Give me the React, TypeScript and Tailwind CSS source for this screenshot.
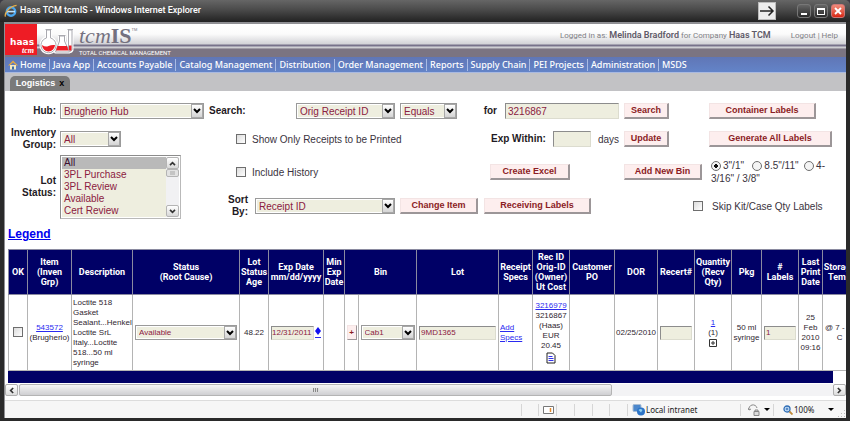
import type { ReactNode } from "react";

const menu = [
  "Java App",
  "Accounts Payable",
  "Catalog Management",
  "Distribution",
  "Order Management",
  "Reports",
  "Supply Chain",
  "PEI Projects",
  "Administration",
  "MSDS",
];

const lotStatuses = ["All", "3PL Purchase", "3PL Review", "Available", "Cert Review"];

const columnWidths = [
  "w-[19px]",
  "w-[44px]",
  "w-[61px]",
  "w-[107px]",
  "w-[29px]",
  "w-[55px]",
  "w-[21px]",
  "w-[14px]",
  "w-[58px]",
  "w-[82px]",
  "w-[34px]",
  "w-[37px]",
  "w-[45px]",
  "w-[43px]",
  "w-[37px]",
  "w-[37px]",
  "w-[30px]",
  "w-[37px]",
  "w-[24px]",
  "w-[34px]",
];

const headings: { lines: string[]; span?: number }[] = [
  { lines: ["OK"] },
  { lines: ["Item", "(Inven", "Grp)"] },
  { lines: ["Description"] },
  { lines: ["Status", "(Root Cause)"] },
  { lines: ["Lot", "Status", "Age"] },
  { lines: ["Exp Date", "mm/dd/yyyy"] },
  { lines: ["Min", "Exp", "Date"] },
  { lines: ["Bin"], span: 2 },
  { lines: ["Lot"] },
  { lines: ["Receipt", "Specs"] },
  { lines: ["Rec ID", "Orig-ID", "(Owner)", "Ut Cost"] },
  { lines: ["Customer", "PO"] },
  { lines: ["DOR"] },
  { lines: ["Recert#"] },
  { lines: ["Quantity", "(Recv", "Qty)"] },
  { lines: ["Pkg"] },
  { lines: ["#", "Labels"] },
  { lines: ["Last", "Print", "Date"] },
  { lines: ["Storage", "Temp"] },
];

function Lines({ items }: { items: string[] }) {
  return (
    <>
      {items.map((line) => (
        <span key={line} className="block whitespace-nowrap">
          {line}
        </span>
      ))}
    </>
  );
}

function Chevron({ className }: { className: string }) {
  return (
    <svg viewBox="0 0 8 6" className={className} fill="none" stroke="currentColor" strokeWidth="2">
      <path d="M1 1l3 3 3-3" />
    </svg>
  );
}

function Select({
  id,
  label,
  value,
  width,
  small,
}: {
  id: string;
  label?: string;
  value: string;
  width: string;
  small?: boolean;
}) {
  return (
    <span className={`relative block ${width}`}>
      <select
        id={id}
        aria-label={label}
        defaultValue={value}
        className={`block w-full appearance-none rounded-none border border-[#9a9a9a] bg-[#eeeedf] pl-[3px] pr-4 text-[#8b2040] outline-1 -outline-offset-2 outline-white ${
          small ? "h-[15px] text-[8px]" : "h-4 text-[10px]"
        }`}
      >
        <option>{value}</option>
      </select>
      <span className="pointer-events-none absolute inset-y-px right-px flex w-3 items-center justify-center border border-[#a8a8a8] bg-linear-to-b from-white to-[#d4d4d4] text-black">
        <Chevron className="h-[6px] w-2" />
      </span>
    </span>
  );
}

function Button({ children, width }: { children: ReactNode; width: string }) {
  return (
    <button
      type="button"
      className={`block h-4 shrink-0 whitespace-nowrap border border-b-2 border-r-2 border-[#f3e4e4] border-b-[#9c9698] border-r-[#9c9698] bg-[#fdeeee] text-[9px] leading-none font-bold text-[#8b1c24] ${width}`}
    >
      {children}
    </button>
  );
}

const field =
  "border border-[#dcdccf] border-l-[#8c8c8c] border-t-[#8c8c8c] bg-[#eeeedf] text-[#8b2040]";

const box =
  "size-[10px] shrink-0 appearance-none border border-[#6e6e6e] bg-linear-to-br from-[#dcdcdc] to-white";

function Radio({ id, label, checked }: { id: string; label: ReactNode; checked?: boolean }) {
  return (
    <>
      <input
        type="radio"
        id={id}
        name="label-size"
        defaultChecked={checked}
        className="size-[10px] appearance-none rounded-full border border-[#6e6e6e] bg-[#f4f4f4] align-middle checked:bg-[radial-gradient(circle,#111_0_2px,#f4f4f4_2px)]"
      />
      <label htmlFor={id} className="ml-0.5">
        {label}
      </label>
    </>
  );
}

function TitleBar() {
  return (
    <div className="flex h-[22px] items-center rounded-t-[5px] bg-linear-to-b from-[#666] via-[#4a4a4a] via-45% to-[#222] pl-1 pr-[5px] text-white">
      <svg viewBox="0 0 14 14" className="size-3.5" fill="none">
        <circle cx="7" cy="7.5" r="4.2" stroke="#4aa6ee" strokeWidth="2.4" />
        <path d="M3 7.6h8" stroke="#bfe3ff" strokeWidth="1.6" />
        <path d="M1.4 12.6C.2 9 6 2 12.6 1.4" stroke="#e8b04a" strokeWidth="1.3" />
      </svg>
      <span className="ml-0.5 flex-1 font-['Roboto',sans-serif] text-[9px] font-medium">
        Haas TCM tcmIS - Windows Internet Explorer
      </span>
      <button type="button" aria-label="Next" className="mr-[21px] flex h-[18px] w-[18px] items-center justify-center border border-[#bbb] bg-[#ececec] text-[#222]">
        <svg viewBox="0 0 16 12" className="h-3 w-4" fill="none" stroke="currentColor" strokeWidth="1.5">
          <path d="M1 6h13M9.500 1.500L14 6l-4.500 4.500" />
        </svg>
      </button>
      <div className="flex gap-[3px]">
        <button type="button" aria-label="Minimize" className="flex h-[14px] w-[14px] items-end justify-center rounded-[3px] border border-[#777] bg-linear-to-b from-[#666] to-[#2a2a2a] pb-0.5">
          <span className="h-0.5 w-[6px] bg-white" />
        </button>
        <button type="button" aria-label="Maximize" className="flex h-[14px] w-[14px] items-center justify-center rounded-[3px] border border-[#777] bg-linear-to-b from-[#666] to-[#2a2a2a]">
          <span className="h-[7px] w-2 border border-t-2 border-white" />
        </button>
        <button type="button" aria-label="Close" className="flex h-[14px] w-[14px] items-center justify-center rounded-[3px] border border-[#c77] bg-linear-to-b from-[#ef8a7a] to-[#d8200c]">
          <svg viewBox="0 0 8 8" className="size-2" stroke="white" strokeWidth="1.8">
            <path d="M1 1l6 6M7 1L1 7" />
          </svg>
        </button>
      </div>
    </div>
  );
}

function Banner() {
  return (
    <header className="flex h-[33px] bg-[linear-gradient(#fff_0,#fbfbfb_10px,#d2d2d6_20px,#77728a_21px,#77728a_22px,#d8d8dc_23px,#c4c4c8_24px,#7b7482_25px)]">
      <div className="flex h-[31px] w-8 flex-col items-end justify-end bg-[#ee1c25] pr-[3px] text-white">
        <span className="font-['DejaVu_Sans',sans-serif] text-[9px] leading-[9px] font-bold">haas</span>
        <span className="font-['Liberation_Serif',serif] text-[8px] leading-[8px] font-bold italic">tcm</span>
      </div>
      <svg viewBox="0 0 36 31" className="ml-0.5 h-[31px] w-9">
        <g fill="#fff" stroke="#fff" strokeWidth="3" strokeLinejoin="round">
          <path d="M7.500 6h4v8a7.500 7.500 0 1 1-4 0z" />
          <path d="M20.500 11.500h5v5.500l5 11h-14l4-11z" />
          <path d="M29.500 6h3.500v20q-1.500 3-3.500 0z" />
        </g>
        <g fill="#fff" stroke="#a9a9af" strokeWidth="1">
          <path d="M6.500 5.500h6M7.500 6v8a7.500 7.500 0 1 0 4 0V6z" />
          <path d="M19.500 11.500h7M20.500 12v5l-4 11h14l-5-11v-5z" />
          <path d="M28.500 5.500h5.500M29.500 6v20q1.500 3 3.500 0V6z" />
        </g>
        <path d="M3 21q3.500 2.500 6.500 1t6.500-1a6.500 6.500 0 0 1-13 0z" fill="#ee1c25" />
        <path d="M18.500 22h9.500l1.500 4.500h-12.500z" fill="#ee1c25" />
        <path d="M30 21.500h2.500v4.500q-1 1.500-2.500 0z" fill="#ee1c25" />
      </svg>
      <div className="ml-1 flex flex-1 flex-col">
        <div className="flex h-6 items-center font-['Liberation_Serif',serif] text-[22px] leading-6 text-[#74717f]">
          <span className="italic">tcm</span>
          <span className="font-bold">IS</span>
          <span className="self-start font-['Liberation_Sans',sans-serif] text-[4px] leading-3">TM</span>
        </div>
        <span className="font-['Roboto',sans-serif] text-[6px] leading-[9px] whitespace-nowrap text-white">
          TOTAL CHEMICAL MANAGEMENT
        </span>
      </div>
      <div className="flex h-6 items-center whitespace-nowrap pr-2 font-['Roboto',sans-serif] text-[8px] text-[#7f7f85]">
        <span>
          Logged in as: <b className="text-[9px] font-semibold text-[#5f5a68]">Melinda Bradford</b> for Company{" "}
          <b className="text-[9px] font-semibold text-[#5f5a68]">Haas TCM</b>
        </span>
        <span className="ml-5">
          <a href="#logout">Logout</a> | <a href="#help">Help</a>
        </span>
      </div>
    </header>
  );
}

function MenuBar() {
  return (
    <nav className="flex h-4 items-center border-b border-[#a9b9e0] bg-linear-to-b from-[#6076b6] to-[#6384c8] font-['Noto_Sans',sans-serif] text-[9px] font-medium whitespace-nowrap text-white">
      <a href="#home" className="flex items-center gap-0.5 px-[3px] leading-3">
        <svg viewBox="0 0 10 10" className="size-[10px]">
          <path d="M2 5h6v4.500H2z" fill="#f3e7c0" />
          <path d="M0 5.500L5 .5l5 5H8.500L5 2.500 1.500 5.500z" fill="#e7a93c" />
          <path d="M4 6.500h2v3H4z" fill="#3a6ea8" />
        </svg>
        Home
      </a>
      {menu.map((item) => (
        <a key={item} href="#menu" className="border-l border-[#a9bbe4] px-[3px] leading-3">
          {item}
        </a>
      ))}
    </nav>
  );
}

function Filters() {
  const label = "text-right font-bold leading-3 text-[#1f1a24]";
  return (
    <form className="grid grid-cols-[48px_153px_191px_84px_140px_85px_1fr] grid-rows-[28px_28px_38px_30px] items-center pl-[3px] pt-[6px] text-[10px] text-[#3a3340]">
      <label htmlFor="hub" className={label}>
        Hub:
      </label>
      <div className="pl-1">
        <Select id="hub" value="Brugherio Hub" width="w-[144px]" />
      </div>
      <div className="flex items-center justify-between pr-[5px]">
        <label htmlFor="search-by" className={label}>
          Search:
        </label>
        <Select id="search-by" value="Orig Receipt ID" width="w-[99px]" />
      </div>
      <Select id="operator" label="Comparison" value="Equals" width="w-[57px]" />
      <div className="flex items-center justify-end gap-2 pr-[5px]">
        <label htmlFor="term" className={label}>
          for
        </label>
        <input id="term" defaultValue="3216867" className={`${field} h-4 w-[114px] px-0.5`} />
      </div>
      <Button width="w-[45px] justify-self-start">Search</Button>
      <Button width="w-[107px] justify-self-start">Container Labels</Button>

      <label htmlFor="group" className={label}>
        Inventory Group:
      </label>
      <div className="pl-1">
        <Select id="group" value="All" width="w-[61px]" />
      </div>
      <div className="col-span-2 flex items-center gap-[6px] pl-[27px]">
        <input type="checkbox" id="only" className={box} />
        <label htmlFor="only">Show Only Receipts to be Printed</label>
      </div>
      <div className="flex items-center justify-end gap-[7px] pr-[5px] whitespace-nowrap">
        <label htmlFor="within" className={label}>
          Exp Within:
        </label>
        <input id="within" className={`${field} h-4 w-[38px] px-0.5`} />
        <span>days</span>
      </div>
      <Button width="w-[45px] justify-self-start">Update</Button>
      <Button width="w-[123px] justify-self-start">Generate All Labels</Button>

      <label htmlFor="status" className={`${label} row-span-2`}>
        Lot Status:
      </label>
      <div className="row-span-2 pl-1">
        <div className="flex w-[121px] border border-[#b9b9b9] border-l-[#8c8c8c] border-t-[#8c8c8c] p-px">
          <select
            id="status"
            size={5}
            defaultValue="All"
            className="h-[60px] flex-1 appearance-none overflow-hidden bg-[#eeeedf] text-[10px] text-[#8b2040]"
          >
            {lotStatuses.map((s) => (
              <option
                key={s}
                className="h-3 min-h-0 px-0.5 py-0 leading-3 checked:bg-[linear-gradient(#b9b9b9,#b9b9b9)] checked:text-[#3a1030]"
              >
                {s}
              </option>
            ))}
          </select>
          <div className="flex w-[13px] flex-col bg-[#f1f1f3] text-[#333]">
            <span className="flex h-3 items-center justify-center rounded-xs border border-[#b4b4b4] bg-linear-to-b from-white to-[#d8d8d8]">
              <Chevron className="h-[5px] w-[7px] rotate-180" />
            </span>
            <span className="flex h-2 items-center justify-center rounded-xs border border-[#b4b4b4] bg-[#e2e2e2]">
              <span className="h-1 w-[5px] bg-[#c4c4c4]" />
            </span>
            <span className="mt-auto flex h-3 items-center justify-center rounded-xs border border-[#b4b4b4] bg-linear-to-b from-white to-[#d8d8d8]">
              <Chevron className="h-[5px] w-[7px]" />
            </span>
          </div>
        </div>
      </div>
      <div className="col-span-2 flex items-center gap-[6px] pl-[27px]">
        <input type="checkbox" id="history" className={box} />
        <label htmlFor="history">Include History</label>
      </div>
      <div className="pl-[6px]">
        <Button width="w-[80px]">Create Excel</Button>
      </div>
      <Button width="w-[78px] justify-self-start">Add New Bin</Button>
      <div className="w-[125px] pl-0.5 leading-[13px]">
        <Radio id="r1" label={'3"/1"'} checked /> &nbsp;&nbsp;
        <Radio id="r2" label={'8.5"/11"'} /> &nbsp;
        <Radio
          id="r3"
          label={
            <>
              <span>4-</span>
              <br />
              <span>3/16" / 3/8"</span>
            </>
          }
        />
      </div>

      <div className="flex items-center justify-between pl-[11px] pr-[5px]">
        <label htmlFor="sort" className={`${label} w-7`}>
          Sort By:
        </label>
        <Select id="sort" value="Receipt ID" width="w-[140px]" />
      </div>
      <Button width="w-[78px] justify-self-start">Change Item</Button>
      <Button width="w-[107px] justify-self-start">Receiving Labels</Button>
      <input type="checkbox" id="skip" className={`${box} mr-[6px] justify-self-end`} />
      <label htmlFor="skip" className="pl-[3px]">
        Skip Kit/Case Qty Labels
      </label>
    </form>
  );
}

function Receipts() {
  const link = "text-[#2a2af0] underline";
  return (
    <div className="ml-[3px] overflow-hidden">
      <table className="w-[848px] table-fixed border-collapse text-[8px] leading-[10px] text-[#2f2630]">
        <colgroup>
          {columnWidths.map((w, i) => (
            <col key={i} className={w} />
          ))}
        </colgroup>
        <thead>
          <tr className="h-[45px] bg-[#000066] font-['Roboto',sans-serif] text-[9px] text-white">
            {headings.map((h, i) => (
              <th key={i} colSpan={h.span} className="border border-[#8a8aa0] p-0 font-bold">
                <span className="flex flex-col items-center">
                  <Lines items={h.lines} />
                </span>
              </th>
            ))}
          </tr>
        </thead>
        <tbody>
          <tr className="h-[76px] text-center *:border *:border-[#b4b4b4] *:p-0">
            <td>
              <input type="checkbox" aria-label="OK" className={`${box} align-middle`} />
            </td>
            <td>
              <a href="#item" className={link}>
                543572
              </a>
              <Lines items={["(Brugherio)"]} />
            </td>
            <td className="text-left">
              <div className="pl-px">
                <Lines
                  items={["Loctite 518", "Gasket", "Sealant...Henkel", "Loctite SrL", "Italy...Loctite", "518...50 ml", "syringe"]}
                />
              </div>
            </td>
            <td>
              <Select id="row-status" label="Status" value="Available" width="mx-auto w-[102px]" small />
            </td>
            <td>48.22</td>
            <td>
              <span className="flex items-center justify-center">
                <input aria-label="Exp Date" defaultValue="12/31/2011" className={`${field} h-[14px] w-[43px]`} />
                <a href="#date" aria-label="Pick a date" className="ml-px border-b border-[#2a2af0] pb-0.5">
                  <svg viewBox="0 0 6 8" className="h-2 w-[6px]">
                    <path d="M3 0l3 4-3 4-3-4z" fill="#1010f0" />
                  </svg>
                </a>
              </span>
            </td>
            <td />
            <td>
              <button
                type="button"
                className="mx-auto block h-[15px] w-[10px] border border-[#f3e4e4] border-r-[#9c9698] border-b-[#9c9698] bg-[#fdeeee] text-[8px] leading-3 font-bold text-[#8b1c24]"
              >
                +
              </button>
            </td>
            <td>
              <Select id="row-bin" label="Bin" value="Cab1" width="mx-auto w-[54px]" small />
            </td>
            <td>
              <input aria-label="Lot" defaultValue="9MD1365" className={`${field} h-[14px] w-[77px] px-px align-middle`} />
            </td>
            <td className="text-left">
              <a href="#specs" className={`${link} block w-[26px] pl-px`}>
                Add Specs
              </a>
            </td>
            <td>
              <a href="#receipt" className={link}>
                3216979
              </a>
              <Lines items={["3216867", "(Haas)", "EUR", "20.45"]} />
              <svg viewBox="0 0 10 12" className="mx-auto mt-px h-3 w-[10px]">
                <path d="M1 1h5.500L9 3.500V11H1z" fill="#fff" stroke="#222" />
                <path d="M2.500 4.500h4M2.500 6.500h5M2.500 8.500h5" stroke="#3333ee" />
              </svg>
            </td>
            <td />
            <td className="whitespace-nowrap">02/25/2010</td>
            <td>
              <input aria-label="Recert#" className={`${field} h-[14px] w-8 align-middle`} />
            </td>
            <td>
              <a href="#quantity" className={link}>
                1
              </a>
              <Lines items={["(1)"]} />
              <svg viewBox="0 0 8 8" className="mx-auto mt-px size-2" fill="none" stroke="#333">
                <path d="M.5.5h7v7h-7zM2 4h4M4 2v4" />
              </svg>
            </td>
            <td>
              <Lines items={["50 ml", "syringe"]} />
            </td>
            <td>
              <input aria-label="Labels" defaultValue="1" className={`${field} h-[14px] w-8 px-px align-middle`} />
            </td>
            <td>
              <Lines items={["25", "Feb", "2010", "09:16"]} />
            </td>
            <td>
              <span className="block pl-0.5 text-left whitespace-nowrap">@ 7 -</span>
              <span className="block">C</span>
            </td>
          </tr>
        </tbody>
      </table>
      <div className="mr-[13px] h-3 bg-[#000066]" />
    </div>
  );
}

function ScrollBar() {
  const end =
    "flex w-[13px] items-center justify-center rounded-xs border border-[#b0b0b0] bg-linear-to-b from-white to-[#dcdcdc] text-[#333]";
  return (
    <div className="mt-px flex h-3 gap-px bg-[#f3f3f5]">
      <span className={end}>
        <Chevron className="h-[5px] w-[7px] rotate-90" />
      </span>
      <span className="flex flex-1">
        <span className="flex w-[73%] items-center justify-center rounded-xs border border-[#b4b4b4] bg-linear-to-b from-[#f4f4f4] to-[#cfcfd2]">
          <span className="h-1 w-[6px] bg-[repeating-linear-gradient(90deg,#888_0_1px,#ddd_1px_2px)]" />
        </span>
      </span>
      <span className={end}>
        <Chevron className="h-[5px] w-[7px] -rotate-90" />
      </span>
    </div>
  );
}

function StatusBar() {
  const cell = "h-3 border-l border-[#d6d6d6]";
  const arrow = <span className="border-x-[3px] border-t-[3px] border-x-transparent border-t-black" />;
  return (
    <footer className="mt-1 flex flex-1 items-center border-t border-[#dcdcdc] bg-[#f6f6f6] font-['Noto_Sans',sans-serif] text-[8px] text-[#222]">
      <span className="flex-1" />
      <span className={`${cell} w-[17px]`} />
      <span className={`${cell} flex w-[18px] items-center pl-1`}>
        <svg viewBox="0 0 11 10" className="h-[10px] w-[11px]" fill="none">
          <path d="M.5 1.500h10v7H.5z" fill="#fff" stroke="#777" />
          <path d="M7.500 3v4" stroke="#e58a2a" strokeWidth="1.5" />
        </svg>
      </span>
      <span className={`${cell} w-[18px]`} />
      <span className={`${cell} w-[18px]`} />
      <span className={`${cell} w-[17px]`} />
      <span className={`${cell} w-[18px]`} />
      <span className={`${cell} flex w-[113px] items-center gap-px pl-1`}>
        <svg viewBox="0 0 13 12" className="h-3 w-[13px]">
          <rect x="1" y=".5" width="8" height="7" rx="1" fill="#4d88cc" stroke="#a9bdd4" />
          <circle cx="9" cy="7.500" r="4" fill="#2c74c8" />
          <path d="M6.500 6q2-2 4 0l-1.500 2.500z" fill="#8fd0ef" />
        </svg>
        Local intranet
      </span>
      <span className={`${cell} flex w-[33px] items-center gap-1 pl-[7px]`}>
        <svg viewBox="0 0 12 12" className="h-3 w-3 shrink-0" fill="none" stroke="#888">
          <path d="M1 6a4 4 0 0 1 8-2M1 6l2-1M1 6L0 4" />
          <path d="M6 7.500h5v4H6zM7 7.500V6h3v1.500" fill="#ddd" />
        </svg>
        {arrow}
      </span>
      <span className={`${cell} flex w-[61px] items-center pl-[9px]`}>
        <svg viewBox="0 0 10 10" className="mr-px size-[10px]" fill="none">
          <circle cx="4" cy="4" r="3" fill="#d8ecff" stroke="#2f6db5" strokeWidth="1.300" />
          <path d="M6.500 6.500L9.500 9.500" stroke="#c08a3a" strokeWidth="1.800" />
          <path d="M2.500 4h3M4 2.500v3" stroke="#2f6db5" />
        </svg>
        <span className="flex-1">100%</span>
        {arrow}
      </span>
      <svg viewBox="0 0 8 8" className="ml-1 size-2 self-end" fill="#bbb">
        <path d="M6 0h1v1H6zM6 3h1v1H6zM3 3h1v1H3zM6 6h1v1H6zM3 6h1v1H3zM0 6h1v1H0z" />
      </svg>
    </footer>
  );
}

export default function App() {
  return (
    <div className="flex min-h-screen flex-col bg-[#3c3a44] font-['Liberation_Sans',Arial,sans-serif]">
      <TitleBar />
      <div className="flex flex-1 flex-col border-x-4 border-b-[3px] border-[#2a2a2a]">
        <main className="flex flex-1 flex-col border-l border-t-2 border-[#8f8f93] bg-white">
          <Banner />
          <MenuBar />
          <div className="flex h-[18px] items-end bg-[#c2c2c5] pl-[5px]">
            <div className="flex h-[15px] w-[60px] items-center justify-center gap-1 rounded-t-[5px] bg-[#7a7a7a] text-[9px] font-bold text-white">
              Logistics
              <button type="button" aria-label="Close tab" className="font-bold text-black">
                x
              </button>
            </div>
          </div>
          <Filters />
          <a href="#legend" className="mt-1 mb-[6px] ml-[3px] self-start text-[12px] leading-[18px] font-bold text-[#0000ee] underline">
            Legend
          </a>
          <Receipts />
          <ScrollBar />
          <StatusBar />
        </main>
      </div>
    </div>
  );
}
